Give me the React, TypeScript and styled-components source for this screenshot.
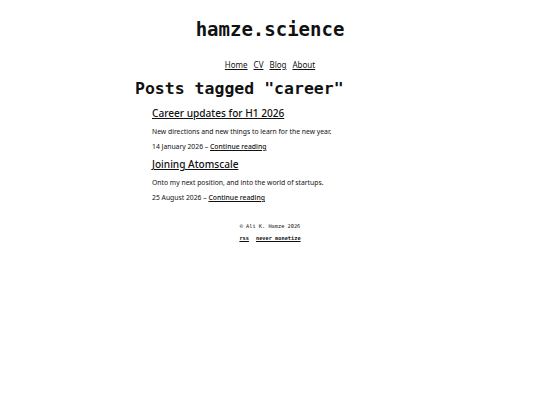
import { createGlobalStyle } from "styled-components"
import styled from "styled-components"

const GlobalStyle = createGlobalStyle`
  html, body {
    margin: 0;
    padding: 0;
    background: #ffffff;
  }
  body {
    font-family: "Noto Sans", sans-serif;
    color: #111;
  }
`

const Page = styled.div`
  width: 270px;
  margin: 0 auto;
  padding-top: 17px;
`

const SiteTitle = styled.h1`
  font-family: "DejaVu Sans Mono", monospace;
  font-weight: bold;
  font-size: 19px;
  text-align: center;
  margin: 0;
  line-height: 24px;
`

const Nav = styled.nav`
  display: flex;
  justify-content: center;
  gap: 6px;
  margin-top: 18px;
  font-size: 8px;
  line-height: 11px;
`

const NavLink = styled.a`
  color: #111;
  text-decoration: underline;
`

const Heading = styled.h2`
  font-family: "DejaVu Sans Mono", monospace;
  font-weight: bold;
  font-size: 16.5px;
  margin: 9px 0 0;
  line-height: 20px;
`

const PostList = styled.ul`
  list-style: none;
  margin: 1px 0 0;
  padding-left: 17px;
`

const Post = styled.li`
  margin-bottom: 0;
`

const PostTitle = styled.a`
  display: inline-block;
  font-size: 10.1px;
  font-weight: 500;
  line-height: 18px;
  color: #111;
  text-decoration: underline;
`

const PostText = styled.p`
  font-size: 6.8px;
  line-height: 9px;
  margin: 5px 0 0;
`

const PostMeta = styled.p`
  font-size: 6.8px;
  line-height: 9px;
  margin: 6px 0 0;
`

const MoreLink = styled.a`
  color: #111;
  font-weight: 500;
  text-decoration: underline;
`

const Footer = styled.footer`
  font-family: "DejaVu Sans Mono", monospace;
  font-size: 5.3px;
  text-align: center;
  margin-top: 20px;
  line-height: 8px;
`

const FooterLinks = styled.div`
  display: flex;
  justify-content: center;
  gap: 7px;
  margin-top: 4px;
`

const FooterLink = styled.a`
  color: #111;
  font-weight: bold;
  text-decoration: underline;
`

export default function App() {
  const posts = [
    {
      title: "Career updates for H1 2026",
      text: "New directions and new things to learn for the new year.",
      date: "14 January 2026",
    },
    {
      title: "Joining Atomscale",
      text: "Onto my next position, and into the world of startups.",
      date: "25 August 2026",
    },
  ]

  return (
    <>
      <GlobalStyle />
      <Page>
        <SiteTitle>hamze.science</SiteTitle>
        <Nav>
          <NavLink href="#">Home</NavLink>
          <NavLink href="#">CV</NavLink>
          <NavLink href="#">Blog</NavLink>
          <NavLink href="#">About</NavLink>
        </Nav>
        <Heading>Posts tagged "career"</Heading>
        <PostList>
          {posts.map((post, i) => (
            <Post key={i}>
              <PostTitle href="#">{post.title}</PostTitle>
              <PostText>{post.text}</PostText>
              <PostMeta>
                {post.date} – <MoreLink href="#">Continue reading</MoreLink>
              </PostMeta>
            </Post>
          ))}
        </PostList>
        <Footer>
          <div>© Ali K. Hamze 2026</div>
          <FooterLinks>
            <FooterLink href="#">rss</FooterLink>
            <FooterLink href="#">never monetize</FooterLink>
          </FooterLinks>
        </Footer>
      </Page>
    </>
  )
}
